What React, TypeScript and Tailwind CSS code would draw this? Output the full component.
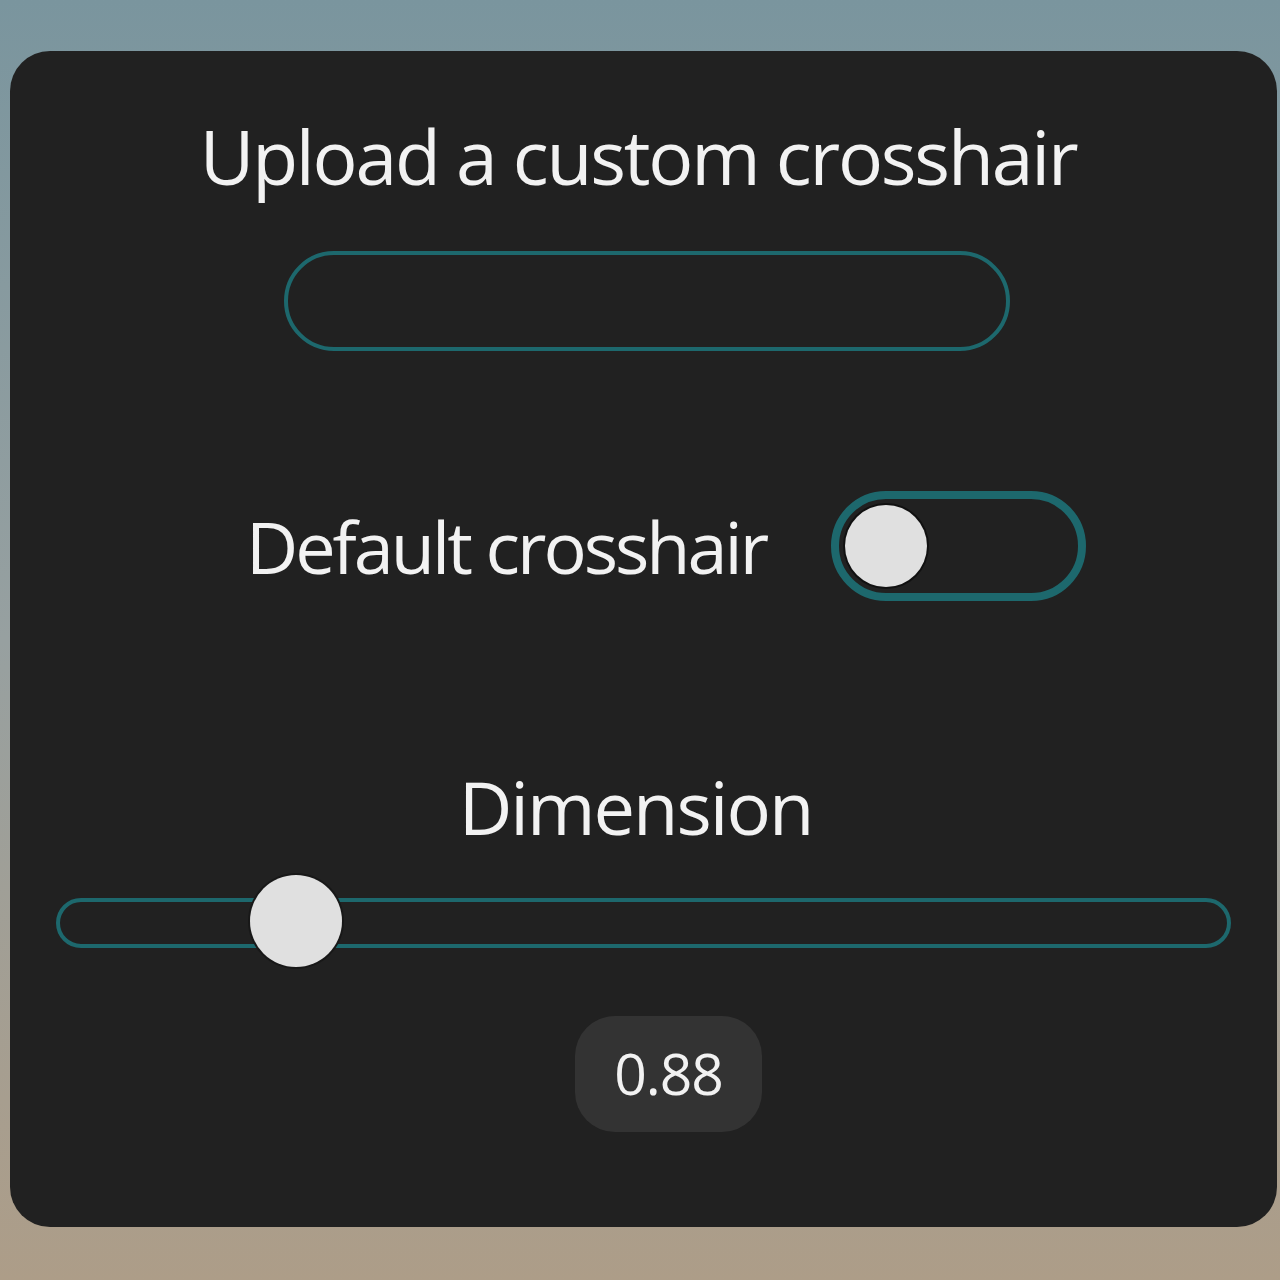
import React, { useState } from "react";

export default function App() {
  const [isDefault, setIsDefault] = useState(false);
  const value = 0.88;
  // thumb position along the track (0..1)
  const pos = 0.204;

  return (
    <div className="min-h-[1280px] w-full bg-gradient-to-b from-[#7a959e] via-[#97a0a0] to-[#ad9d88] pt-[51px] pl-[10px] pr-[3px] font-['Open_Sans',sans-serif] text-[#f2f2f2]">
      <div className="h-[1176px] rounded-[40px] bg-[#212121] flex flex-col items-center">
        <h2 className="mt-[65px] mr-[11px] h-[80px] leading-[80px] text-[75px] tracking-[-2.2px] whitespace-nowrap">
          Upload a custom crosshair
        </h2>

        <div className="mt-[55px] ml-[7px] w-[726px] h-[100px] rounded-full border-4 border-[#1d686d]" />

        <div className="mt-[140px] ml-[45px] flex items-center gap-[65px]">
          <span className="text-[72px] leading-[100px] tracking-[-3px] whitespace-nowrap">Default crosshair</span>
          <button
            onClick={() => setIsDefault(!isDefault)}
            className={`w-[255px] h-[110px] rounded-full border-[8px] border-[#1d686d] flex items-center px-[6px] ${isDefault ? "justify-end" : "justify-start"}`}
          >
            <span className="block w-[82px] h-[82px] rounded-full bg-[#e0e0e0] shadow-[0_0_0_2px_#111]" />
          </button>
        </div>

        <div className="mt-[156px] mr-[16px] text-[74px] leading-[100px] tracking-[-2px]">Dimension</div>

        <div className="mt-[41px] w-[1175px] relative">
          <div className="h-[50px] rounded-full border-4 border-[#1d686d]" />
          <div
            className="absolute top-[46%] -translate-y-1/2 -translate-x-1/2 w-[92px] h-[92px] rounded-full bg-[#e0e0e0] shadow-[0_0_0_2px_#181818]"
            style={{ left: `${pos * 100}%` }}
          />
        </div>

        <div className="mt-[68px] ml-[50px] w-[187px] h-[116px] rounded-[40px] bg-[#333333] flex items-center justify-center text-[57px] tracking-[-1px]">
          {value.toFixed(2)}
        </div>
      </div>
    </div>
  );
}
